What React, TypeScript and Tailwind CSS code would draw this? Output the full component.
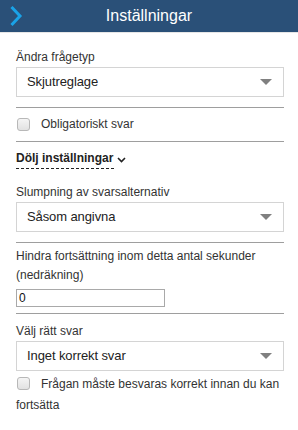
import React from 'react'

const font = { fontFamily: '"Liberation Sans", Arial, sans-serif' }

function Arrow() {
  return (
    <svg width="12" height="6" viewBox="0 0 12 6" className="shrink-0 mr-[1px]">
      <path d="M0 0 L12 0 L6 6 Z" fill="#808080" />
    </svg>
  )
}

function Select({ value }: { value: string }) {
  return (
    <div className="h-[30px] border border-[#d4d4d4] bg-white flex items-center justify-between pl-[10px] pr-[10px] text-[13px] text-[#222]">
      <span className="tracking-[-0.1px]">{value}</span>
      <Arrow />
    </div>
  )
}

function Checkbox() {
  return (
    <span className="inline-block w-[13px] h-[13px] rounded-[3px] border border-[#b8b8b8] bg-gradient-to-b from-[#f5f5f5] to-[#e2e2e2] shrink-0" />
  )
}

function Divider({ className }: { className: string }) {
  return <div className={'h-px bg-[#9e9e9e] ' + className} />
}

export default function App() {
  return (
    <div className="w-[298px] h-[430px] bg-white text-[12px] text-[#333] overflow-hidden" style={font}>
      <div className="h-[33px] bg-[#2a5078] border-b border-[#e6e6e6] relative flex items-center justify-center">
        <svg width="14" height="22" viewBox="0 0 14 22" className="absolute left-[9px] top-[5px]">
          <path d="M2.5 2 L11 11 L2.5 20" stroke="#1aa3e8" strokeWidth="3" fill="none" />
        </svg>
        <span className="text-white text-[16px] leading-[32px]">Inställningar</span>
      </div>

      <div className="pl-4 pr-[14px]">
        <div className="mt-[14px] leading-[20px]">Ändra frågetyp</div>
        <Select value="Skjutreglage" />
        <Divider className="mt-[10px]" />

        <div className="mt-[6px] h-[20px] flex items-center">
          <span className="ml-[1px] flex"><Checkbox /></span>
          <span className="ml-[11px] leading-[20px]">Obligatoriskt svar</span>
        </div>
        <Divider className="mt-[7px]" />

        <div className="mt-[6px]">
          <span className="inline-flex items-center leading-[20px] font-bold text-[#222] border-b border-dashed border-[#222]">
            Dölj inställningar
            <svg width="9" height="6" viewBox="0 0 9 6" className="ml-[4px] -mr-[12px] mt-[3px]">
              <path d="M1 1 L4.5 4.5 L8 1" stroke="#222" strokeWidth="1.6" fill="none" />
            </svg>
          </span>
        </div>

        <div className="mt-[13px] leading-[20px]">Slumpning av svarsalternativ</div>
        <Select value="Såsom angivna" />
        <Divider className="mt-[10px]" />

        <div className="mt-[4px] leading-[19px]">
          Hindra fortsättning inom detta antal sekunder (nedräkning)
        </div>
        <div className="mt-[4px] w-[149px] h-[18px] border border-[#a9a9a9] flex items-center pl-[2px] text-[12px] text-[#111]">
          0
        </div>
        <Divider className="mt-[6px]" />

        <div className="mt-[7px] leading-[20px]">Välj rätt svar</div>
        <Select value="Inget korrekt svar" />

        <div className="mt-[4px] leading-[19px]">
          <span className="inline-block align-[-2px] ml-[1px] mr-[11px]"><Checkbox /></span>
          Frågan måste besvaras korrekt innan du kan fortsätta
        </div>
      </div>
    </div>
  )
}
